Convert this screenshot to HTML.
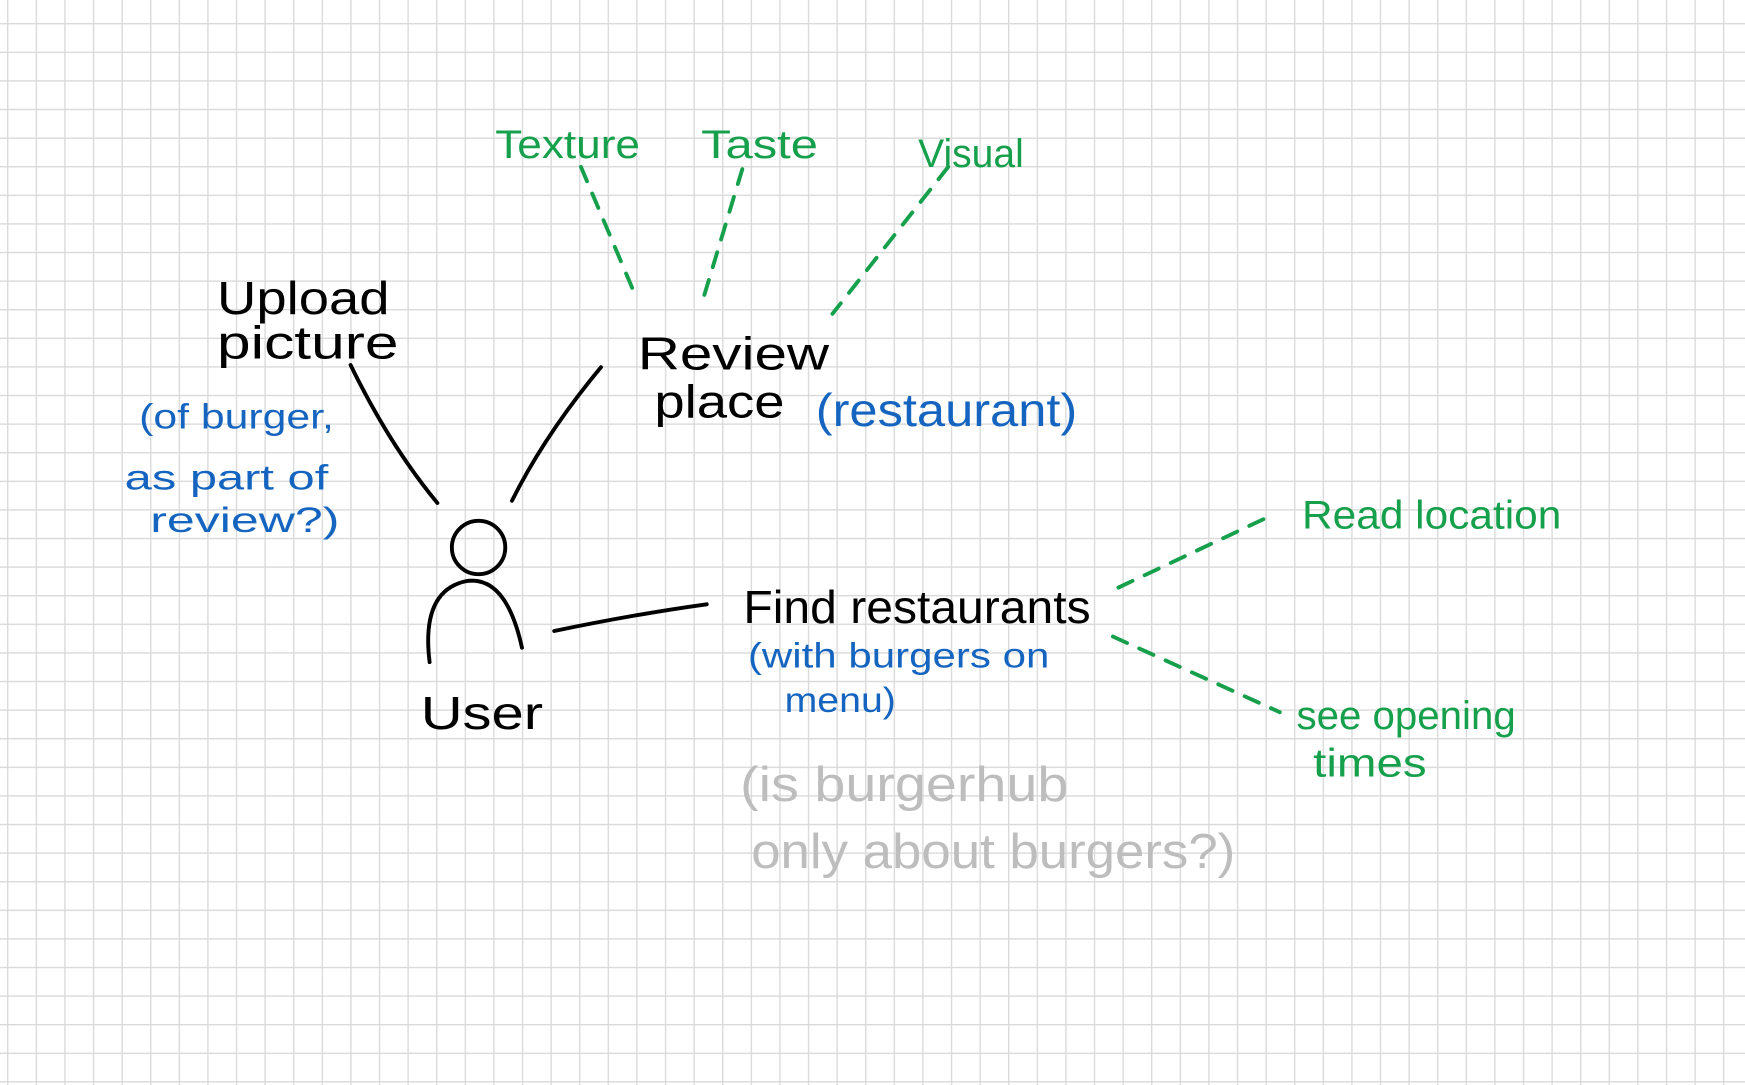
<!DOCTYPE html>
<html><head><meta charset="utf-8"><style>
html,body{margin:0;padding:0;background:#fff;}
svg{display:block}
text{font-family:"Liberation Sans",sans-serif;}
</style></head><body>
<svg width="1745" height="1085" viewBox="0 0 1568 975" xmlns="http://www.w3.org/2000/svg">
<defs>
<pattern id="g" x="6.3" y="20.7" width="25.7" height="25.7" patternUnits="userSpaceOnUse">
<path d="M0 0H25.7M0 0V25.7" stroke="#d9d9d9" stroke-width="2.4" fill="none"/>
</pattern>
</defs>
<rect width="1568" height="975" fill="#fff"/>
<rect x="-30" y="-30" width="1630" height="1040" fill="url(#g)"/>

<g fill="none" stroke-linecap="round" stroke-width="3.5">
<g stroke="#16a04c" stroke-dasharray="14 12">
<path d="M522 150L572 268"/><path d="M667 152L632 268"/><path d="M852 150L748 282"/>
<path d="M1005 528L1145 462"/><path d="M1000 572L1150 640"/>
</g>
<g stroke="#000">
<path d="M315 328Q350 400 393 452"/><path d="M540 330Q490 390 460 450"/>
<path d="M498 567Q570 552 635 543"/>
<circle cx="430" cy="492" r="24"/>
<path d="M386 595Q378 530 420 522Q455 518 469 582"/>
</g>
</g>

<g font-size="36" fill="#16a04c">
<text x="445" y="142" textLength="130" lengthAdjust="spacingAndGlyphs">Texture</text>
<text x="630" y="142" textLength="105" lengthAdjust="spacingAndGlyphs">Taste</text>
<text x="825" y="150" textLength="95" lengthAdjust="spacingAndGlyphs">Visual</text>
<text x="1170" y="475" textLength="233" lengthAdjust="spacingAndGlyphs">Read location</text>
<text x="1165" y="655" textLength="197" lengthAdjust="spacingAndGlyphs">see opening</text>
<text x="1180" y="698" textLength="102" lengthAdjust="spacingAndGlyphs">times</text>
</g>
<g font-size="42" fill="#000">
<text x="195" y="282" textLength="155" lengthAdjust="spacingAndGlyphs">Upload</text>
<text x="195" y="322" textLength="163" lengthAdjust="spacingAndGlyphs">picture</text>
<text x="573" y="332" textLength="172" lengthAdjust="spacingAndGlyphs">Review</text>
<text x="588" y="375" textLength="117" lengthAdjust="spacingAndGlyphs">place</text>
<text x="378" y="655" textLength="110" lengthAdjust="spacingAndGlyphs">User</text>
<text x="668" y="560" textLength="312" lengthAdjust="spacingAndGlyphs">Find restaurants</text>
</g>
<g fill="#1565c0">
<text x="733" y="383" font-size="42" textLength="235" lengthAdjust="spacingAndGlyphs">(restaurant)</text>
<g font-size="32">
<text x="125" y="385" textLength="175" lengthAdjust="spacingAndGlyphs">(of burger,</text>
<text x="112" y="440" textLength="183" lengthAdjust="spacingAndGlyphs">as part of</text>
<text x="135" y="478" textLength="170" lengthAdjust="spacingAndGlyphs">review?)</text>
<text x="672" y="600" textLength="271" lengthAdjust="spacingAndGlyphs">(with burgers on</text>
<text x="705" y="640" textLength="100" lengthAdjust="spacingAndGlyphs">menu)</text>
</g>
</g>
<g fill="#bdbdbd" font-size="44">
<text x="665" y="720" textLength="295" lengthAdjust="spacingAndGlyphs">(is burgerhub</text>
<text x="675" y="780" textLength="435" lengthAdjust="spacingAndGlyphs">only about burgers?)</text>
</g>
</svg>
</body></html>
